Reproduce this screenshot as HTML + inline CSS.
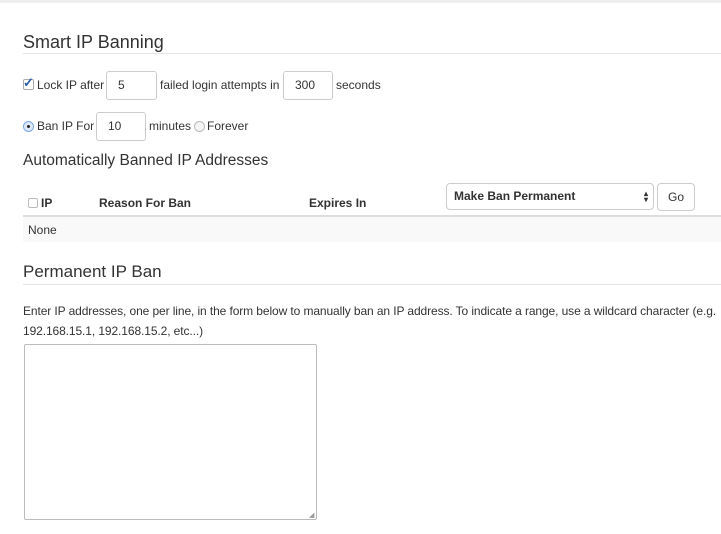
<!DOCTYPE html>
<html><head><style>
body{margin:0;width:721px;height:534px;overflow:hidden;background:#fff;font-family:"Liberation Sans",sans-serif;color:#333;font-size:12px;position:relative}
.a{position:absolute;white-space:nowrap}
.inp{position:absolute;border:1px solid #ccc;border-radius:3px;box-sizing:border-box;font-size:12px;padding-left:11px;line-height:26px;background:#fff}
</style></head><body>
<div class="a" style="left:0;top:0;width:721px;height:3px;background:#eee"></div>
<div class="a" style="left:23px;top:32px;font-size:18px">Smart IP Banning</div>
<div class="a" style="left:23px;top:53px;width:698px;height:1px;background:#e5e5e5"></div>

<div class="a" style="left:23px;top:79px;width:11px;height:11px;border:1px solid #aaa;border-radius:2px;box-sizing:border-box;background:#fff"></div>
<div class="a" style="left:23px;top:75px;font-size:13px;color:#2a5db0;font-weight:bold">✓</div>
<div class="a" style="left:37px;top:78px">Lock IP after</div>
<div class="inp" style="left:106px;top:71px;width:51px;height:29px">5</div>
<div class="a" style="left:160px;top:78px">failed login attempts in</div>
<div class="inp" style="left:283px;top:71px;width:50px;height:29px">300</div>
<div class="a" style="left:336px;top:78px">seconds</div>

<div class="a" style="left:23px;top:121px;width:11px;height:11px;border:1px solid #7aa7e0;border-radius:50%;box-sizing:border-box;background:#dde9fa"></div>
<div class="a" style="left:27px;top:125px;width:3px;height:3px;border-radius:50%;background:#222"></div>
<div class="a" style="left:37px;top:119px">Ban IP For</div>
<div class="inp" style="left:96px;top:112px;width:50px;height:29px">10</div>
<div class="a" style="left:149px;top:119px">minutes</div>
<div class="a" style="left:194px;top:121px;width:11px;height:11px;border:1px solid #bbb;border-radius:50%;box-sizing:border-box;background:#f4f4f4"></div>
<div class="a" style="left:207px;top:119px">Forever</div>

<div class="a" style="left:23px;top:152px;font-size:15.5px">Automatically Banned IP Addresses</div>

<div class="a" style="left:28px;top:198px;width:10px;height:10px;border:1px solid #bbb;border-radius:2px;box-sizing:border-box"></div>
<div class="a" style="left:41px;top:196px;font-weight:bold">IP</div>
<div class="a" style="left:99px;top:196px;font-weight:bold">Reason For Ban</div>
<div class="a" style="left:309px;top:196px;font-weight:bold">Expires In</div>
<div class="a" style="left:446px;top:183px;width:208px;height:27px;border:1px solid #ccc;border-radius:4px;box-sizing:border-box;font-weight:bold;padding-left:7px;line-height:25px">Make Ban Permanent<span style="position:absolute;right:5px;top:6px;font-size:8px;line-height:8px">▴</span><span style="position:absolute;right:5px;top:12px;font-size:8px;line-height:8px">▾</span></div>
<div class="a" style="left:657px;top:183px;width:38px;height:28px;border:1px solid #ccc;border-radius:4px;box-sizing:border-box;text-align:center;line-height:26px">Go</div>
<div class="a" style="left:23px;top:215px;width:698px;height:2px;background:#ddd"></div>
<div class="a" style="left:23px;top:217px;width:698px;height:25px;background:#f9f9f9"></div>
<div class="a" style="left:28px;top:223px">None</div>

<div class="a" style="left:23px;top:262px;font-size:17px">Permanent IP Ban</div>
<div class="a" style="left:23px;top:284px;width:698px;height:1px;background:#e5e5e5"></div>
<div class="a" style="left:23px;top:301px;line-height:20px;letter-spacing:-0.1px">Enter IP addresses, one per line, in the form below to manually ban an IP address. To indicate a range, use a wildcard character (e.g.<br>192.168.15.1, 192.168.15.2, etc...)</div>
<div class="a" style="left:24px;top:344px;width:293px;height:176px;border:1px solid #bbb;box-sizing:border-box;border-radius:2px"></div>
<div class="a" style="left:309px;top:511px;font-size:7px;color:#999">◢</div>
</body></html>
